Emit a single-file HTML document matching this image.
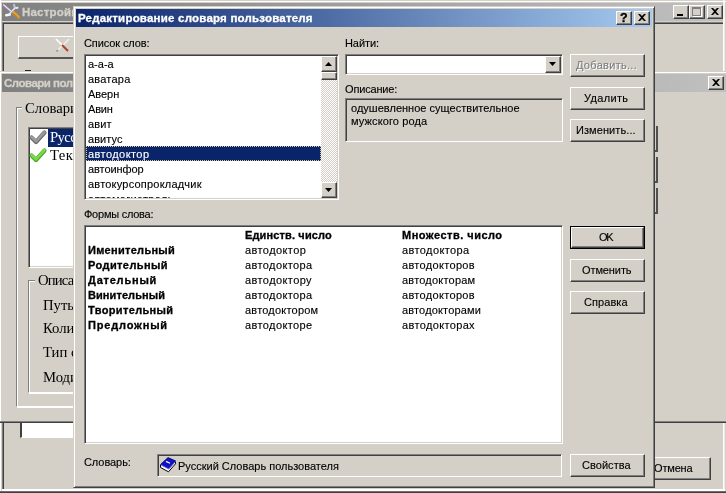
<!DOCTYPE html>
<html><head><meta charset="utf-8"><title>dlg</title>
<style>
*{margin:0;padding:0;box-sizing:border-box}
html,body{width:726px;height:493px;overflow:hidden;background:#d4d0c8}
body{position:relative;will-change:transform;-webkit-text-stroke:0.12px;font-family:"Liberation Sans",sans-serif;font-size:11px;color:#000}
.a{position:absolute}
.t{position:absolute;white-space:nowrap;line-height:13px;height:13px}
.s{position:absolute;white-space:nowrap;-webkit-text-stroke:0;font-family:"Liberation Serif",serif;font-size:14.7px;line-height:17px;height:17px}
.btn{position:absolute;background:#d4d0c8;border:1px solid;border-color:#fff #404040 #404040 #fff;box-shadow:inset -1px -1px 0 #808080,inset 1px 1px 0 #d4d0c8}
.sunk{position:absolute;border:1px solid;border-color:#808080 #fff #fff #808080;box-shadow:inset 1px 1px 0 #404040,inset -1px -1px 0 #d4d0c8;background:#fff;overflow:hidden}
.cap{position:absolute;background:#d4d0c8;border:1px solid;border-color:#fff #404040 #404040 #fff;box-shadow:inset -1px -1px 0 #808080}
.gb{position:absolute;border:1px solid;border-color:#808080 #fff #fff #808080;box-shadow:inset 1px 1px 0 #fff, 1px 1px 0 #fff}
svg{position:absolute;overflow:visible}
</style></head><body>
<div class="a" style="left:0;top:1px;width:726px;height:1px;background:#fff"></div>
<div class="a" style="left:0;top:0;width:1px;height:493px;background:#fff"></div>
<div class="a" style="left:2px;top:3px;width:721px;height:18px;background:linear-gradient(90deg,#808080,#c0c0c0)"></div>
<div class="a" style="left:723px;top:0;width:2px;height:72px;background:#f4f3f0"></div>
<svg style="left:4px;top:4px" width="16" height="16" viewBox="0 0 16 16"><path d="M2.2 11.2L5.8 10.6" stroke="#f8f6ff" stroke-width="2.4" stroke-linecap="round"/><path d="M4.5 10.8L11 4" stroke="#ecebfa" stroke-width="1.5"/><path d="M10.4 0.2c-.5 1.7-.1 2.9 1 3.5 1 .5 2 .3 2.8-.4" stroke="#e4e6fb" stroke-width="1.8" fill="none"/><path d="M10.2 1.2c-.2 1 .1 1.8.7 2.2" stroke="#6a74c0" stroke-width="0.8" fill="none"/><path d="M-0.8 0.6l9 7.6" stroke="#b9a6e0" stroke-width="2"/><path d="M-0.8 0.6l9 7.6" stroke="#fff" stroke-width="0.8"/><path d="M9.4 8.4L14.4 13" stroke="#e9a21c" stroke-width="2.8" stroke-linecap="round"/><path d="M9.2 9.4l4.6 4.2" stroke="#b97a10" stroke-width="0.8"/></svg>
<div class="t" style="left:22px;top:6px;font-size:11.5px;font-weight:bold;-webkit-text-stroke:0.3px;color:#d4d0c8;letter-spacing:0.21px;">Настройки</div><div class="cap" style="left:673px;top:5px;width:16px;height:14px;"></div>
<div class="a" style="left:677px;top:14px;width:6px;height:2px;background:#000"></div>
<div class="cap" style="left:689px;top:5px;width:16px;height:14px;"></div>
<div class="a" style="left:692px;top:7px;width:9px;height:9px;border:1px solid #808080;border-top-width:2px;box-shadow:1px 1px 0 #fff"></div>
<div class="cap" style="left:707px;top:5px;width:16px;height:14px;"></div>
<svg style="left:711px;top:8px" width="8" height="7" viewBox="0 0 8 7"><path d="M0 0h2l2 2 2-2h2L5 3.5 8 7H6L4 5 2 7H0l3-3.5z" fill="#000"/></svg>
<div class="a" style="left:2px;top:22px;width:721px;height:1px;background:#808080"></div>
<div class="a" style="left:3px;top:23px;width:720px;height:1px;background:#404040"></div>
<div class="a" style="left:2px;top:22px;width:1px;height:468px;background:#808080"></div>
<div class="a" style="left:3px;top:23px;width:1px;height:466px;background:#404040"></div>
<div class="a" style="left:723px;top:22px;width:1px;height:469px;background:#fff"></div>
<div class="a" style="left:724px;top:22px;width:1px;height:469px;background:#eceae6"></div>
<div class="a" style="left:2px;top:489px;width:723px;height:2px;background:#fff"></div>
<div class="a" style="left:0;top:491px;width:726px;height:1px;background:#707070"></div>
<div class="a" style="left:0;top:492px;width:726px;height:1px;background:#404040"></div>
<div class="a" style="left:18px;top:36px;width:60px;height:23px;border-top:1px solid #fff;border-left:1px solid #fff;border-bottom:2px solid #555"></div>
<svg style="left:55px;top:38px" width="16" height="15" viewBox="0 0 16 15"><path d="M1 1l6 6" stroke="#fff" stroke-width="1.6"/><path d="M14 1L3 12" stroke="#f0eeea" stroke-width="1.6"/><path d="M3 12l-1.5 1.5" stroke="#909090" stroke-width="1.6"/><path d="M7 7l6 6" stroke="#a8402c" stroke-width="1.9"/></svg>
<div class="a" style="left:25px;top:70px;width:6px;height:1px;background:#222"></div>
<div class="a" style="left:20px;top:422px;width:60px;height:16px;background:#fff;border-left:2px solid #404040;border-bottom:1px solid #fff"></div>
<div class="btn" style="left:636px;top:457px;width:75px;height:23px;"></div>
<div class="t" style="left:654px;top:462px;letter-spacing:-0.17px;">Отмена</div><div class="a" style="left:0;top:71px;width:726px;height:352px;background:#d4d0c8"></div>
<div class="a" style="left:0;top:72px;width:726px;height:1px;background:#fff"></div>
<div class="a" style="left:0;top:72px;width:1px;height:350px;background:#fff"></div>
<div class="a" style="left:2px;top:74px;width:724px;height:18px;background:linear-gradient(90deg,#808080,#c0c0c0)"></div>
<div class="t" style="left:4px;top:77px;font-size:11.5px;font-weight:bold;-webkit-text-stroke:0.3px;color:#d4d0c8;letter-spacing:-0.5px;">Словари пользователя</div><div class="cap" style="left:708px;top:76px;width:16px;height:14px;"></div>
<svg style="left:712px;top:79px" width="8" height="7" viewBox="0 0 8 7"><path d="M0 0h2l2 2 2-2h2L5 3.5 8 7H6L4 5 2 7H0l3-3.5z" fill="#000"/></svg>
<div class="a" style="left:0;top:421px;width:726px;height:1px;background:#808080"></div>
<div class="a" style="left:0;top:422px;width:726px;height:1px;background:#404040"></div>
<div class="gb" style="left:16px;top:107px;width:620px;height:300px;"></div>
<div class="s" style="left:25px;top:99.5px;background:#d4d0c8;padding:0 3px;margin-left:-3px;">Словари</div><div class="sunk" style="left:28px;top:127px;width:300px;height:141px;"></div>
<div class="a" style="left:48px;top:129px;width:120px;height:18px;background:#0a246a"></div>
<svg style="left:30px;top:130px" width="16" height="14" viewBox="0 0 16 14"><path d="M1.5 7.5L6 12 14.5 2.5" stroke="#6a6a6a" stroke-width="4.2" fill="none" stroke-linejoin="round" stroke-linecap="round"/><path d="M1.5 7L6 11.3 14.5 2" stroke="#9a9a9a" stroke-width="2.6" fill="none" stroke-linejoin="round" stroke-linecap="round"/></svg>
<svg style="left:30px;top:148px" width="16" height="14" viewBox="0 0 16 14"><path d="M1.5 7.5L6 12 14.5 2.5" stroke="#4aa828" stroke-width="4.2" fill="none" stroke-linejoin="round" stroke-linecap="round"/><path d="M1.5 7L6 11.3 14.5 2" stroke="#7ad84a" stroke-width="2.6" fill="none" stroke-linejoin="round" stroke-linecap="round"/></svg>
<div class="s" style="left:50px;top:129px;color:#fff;letter-spacing:-0.62px;">Русский</div><div class="s" style="left:50px;top:147px;letter-spacing:0.36px;">Текущий</div><div class="gb" style="left:28px;top:280px;width:590px;height:113px;"></div>
<div class="s" style="left:38px;top:272px;letter-spacing:-0.85px;background:#d4d0c8;padding:0 3px;margin-left:-3px;">Описание</div><div class="s" style="left:43px;top:297px;">Путь</div><div class="s" style="left:43px;top:320px;">Количество</div><div class="s" style="left:43px;top:344px;">Тип словаря</div><div class="s" style="left:43px;top:369px;">Модифицирован</div><div class="a" style="left:600px;top:126px;width:58px;height:26px;border-right:2px solid #505050;border-bottom:2px solid #505050"></div>
<div class="a" style="left:600px;top:157px;width:58px;height:26px;border-right:2px solid #505050;border-bottom:2px solid #505050"></div>
<div class="a" style="left:600px;top:188px;width:58px;height:26px;border-right:2px solid #505050;border-bottom:2px solid #505050"></div>
<div class="a" style="left:73px;top:6px;width:582px;height:482px;background:#d4d0c8;border:1px solid;border-color:#d4d0c8 #404040 #404040 #d4d0c8;box-shadow:inset 1px 1px 0 #fff,inset -1px -1px 0 #808080"></div>
<div class="a" style="left:76px;top:9px;width:576px;height:18px;background:linear-gradient(90deg,#0a246a,#a6caf0)"></div>
<div class="t" style="left:78px;top:12px;font-size:11.5px;font-weight:bold;-webkit-text-stroke:0.3px;color:#fff;letter-spacing:0.21px;">Редактирование словаря пользователя</div><div class="cap" style="left:616px;top:11px;width:16px;height:14px;"></div>
<div class="t" style="left:620px;top:12px;font-size:12.5px;font-weight:bold;-webkit-text-stroke:0.3px;">?</div><div class="cap" style="left:634px;top:11px;width:16px;height:14px;"></div>
<svg style="left:638px;top:14px" width="8" height="7" viewBox="0 0 8 7"><path d="M0 0h2l2 2 2-2h2L5 3.5 8 7H6L4 5 2 7H0l3-3.5z" fill="#000"/></svg>
<div class="t" style="left:84px;top:37px;letter-spacing:-0.1px;">Список слов:</div><div class="t" style="left:345px;top:37px;letter-spacing:-0.07px;">Найти:</div><div class="t" style="left:345px;top:83px;letter-spacing:-0.17px;">Описание:</div><div class="t" style="left:84px;top:208px;letter-spacing:-0.24px;">Формы слова:</div><div class="t" style="left:84px;top:456px;letter-spacing:-0.07px;">Словарь:</div><div class="sunk" style="left:84px;top:54px;width:255px;height:146px;"></div>
<div class="a" style="left:86px;top:56px;width:235px;height:142px;overflow:hidden">
<div class="t" style="left:2px;top:2px;">а-а-а</div><div class="t" style="left:2px;top:17px;letter-spacing:0.22px;">аватара</div><div class="t" style="left:2px;top:32px;letter-spacing:-0.04px;">Аверн</div><div class="t" style="left:2px;top:47px;letter-spacing:-0.2px;">Авин</div><div class="t" style="left:2px;top:62px;letter-spacing:0.11px;">авит</div><div class="t" style="left:2px;top:77px;letter-spacing:0.07px;">авитус</div><div class="a" style="left:0;top:90px;width:235px;height:15px;background:#0a246a;outline:1px dotted #d8c890;outline-offset:-1px"></div>
<div class="t" style="left:2px;top:92px;color:#fff;letter-spacing:0.43px;">автодоктор</div><div class="t" style="left:2px;top:107px;letter-spacing:-0.07px;">автоинфор</div><div class="t" style="left:2px;top:122px;letter-spacing:0.21px;">автокурсопрокладчик</div><div class="t" style="left:2px;top:137px;letter-spacing:0.31px;">автомагистраль</div></div>
<div class="a" style="left:321px;top:56px;width:16px;height:142px;background:repeating-conic-gradient(#fff 0 25%,#d4d0c8 0 50%) 0 0/2px 2px"></div>
<div class="cap" style="left:321px;top:56px;width:16px;height:16px;"></div>
<svg style="left:325px;top:62px" width="7" height="4" viewBox="0 0 7 4"><path d="M3.5 0L7 4H0z" fill="#000"/></svg>
<div class="cap" style="left:321px;top:72px;width:16px;height:8px;"></div>
<div class="cap" style="left:321px;top:182px;width:16px;height:16px;"></div>
<svg style="left:325px;top:188px" width="7" height="4" viewBox="0 0 7 4"><path d="M0 0h7L3.5 4z" fill="#000"/></svg>
<div class="sunk" style="left:345px;top:54px;width:218px;height:21px;"></div>
<div class="cap" style="left:545px;top:56px;width:16px;height:17px;"></div>
<svg style="left:549px;top:62px" width="7" height="4" viewBox="0 0 7 4"><path d="M0 0h7L3.5 4z" fill="#000"/></svg>
<div class="sunk" style="left:345px;top:98px;width:218px;height:44px;background:#d4d0c8"></div>
<div class="t" style="left:351px;top:102px;letter-spacing:0.02px;">одушевленное существительное</div><div class="t" style="left:351px;top:115px;letter-spacing:0.12px;">мужского рода</div><div class="btn" style="left:570px;top:54px;width:75px;height:23px;"></div>
<div class="t" style="left:577px;top:60px;color:#fff;letter-spacing:0.3px;">Добавить...</div><div class="t" style="left:576px;top:59px;color:#808080;letter-spacing:0.3px;">Добавить...</div><div class="btn" style="left:570px;top:87px;width:75px;height:23px;"></div>
<div class="t" style="left:584px;top:92px;letter-spacing:0.35px;">Удалить</div><div class="btn" style="left:570px;top:119px;width:75px;height:23px;"></div>
<div class="t" style="left:576px;top:124px;letter-spacing:0.08px;">Изменить...</div><div class="a" style="left:570px;top:226px;width:75px;height:23px;background:#000"></div>
<div class="btn" style="left:571px;top:227px;width:73px;height:21px;"></div>
<div class="t" style="left:599px;top:231px;letter-spacing:-1.31px;">OK</div><div class="btn" style="left:570px;top:259px;width:75px;height:23px;"></div>
<div class="t" style="left:582px;top:264px;letter-spacing:-0.1px;">Отменить</div><div class="btn" style="left:570px;top:291px;width:75px;height:23px;"></div>
<div class="t" style="left:584px;top:296px;letter-spacing:0.07px;">Справка</div><div class="btn" style="left:570px;top:454px;width:75px;height:23px;"></div>
<div class="t" style="left:582px;top:459px;letter-spacing:0.04px;">Свойства</div><div class="sunk" style="left:84px;top:225px;width:479px;height:219px;"></div>
<div class="a" style="left:86px;top:227px;width:475px;height:215px;overflow:hidden">
<div class="t" style="left:159px;top:2px;font-weight:bold;-webkit-text-stroke:0.3px;letter-spacing:0.14px;">Единств. число</div><div class="t" style="left:316px;top:2px;font-weight:bold;-webkit-text-stroke:0.3px;letter-spacing:0.49px;">Множеств. число</div><div class="t" style="left:2px;top:17px;font-weight:bold;-webkit-text-stroke:0.3px;letter-spacing:0.29px;">Именительный</div><div class="t" style="left:159px;top:17px;letter-spacing:0.41px;">автодоктор</div><div class="t" style="left:316px;top:17px;letter-spacing:0.39px;">автодоктора</div><div class="t" style="left:2px;top:32px;font-weight:bold;-webkit-text-stroke:0.3px;letter-spacing:0.42px;">Родительный</div><div class="t" style="left:159px;top:32px;letter-spacing:0.39px;">автодоктора</div><div class="t" style="left:316px;top:32px;letter-spacing:0.32px;">автодокторов</div><div class="t" style="left:2px;top:47px;font-weight:bold;-webkit-text-stroke:0.3px;letter-spacing:0.79px;">Дательный</div><div class="t" style="left:159px;top:47px;letter-spacing:0.41px;">автодоктору</div><div class="t" style="left:316px;top:47px;letter-spacing:0.21px;">автодокторам</div><div class="t" style="left:2px;top:62px;font-weight:bold;-webkit-text-stroke:0.3px;letter-spacing:0.08px;">Винительный</div><div class="t" style="left:159px;top:62px;letter-spacing:0.39px;">автодоктора</div><div class="t" style="left:316px;top:62px;letter-spacing:0.32px;">автодокторов</div><div class="t" style="left:2px;top:77px;font-weight:bold;-webkit-text-stroke:0.3px;letter-spacing:0.36px;">Творительный</div><div class="t" style="left:159px;top:77px;letter-spacing:0.21px;">автодоктором</div><div class="t" style="left:316px;top:77px;letter-spacing:0.16px;">автодокторами</div><div class="t" style="left:2px;top:92px;font-weight:bold;-webkit-text-stroke:0.3px;letter-spacing:0.82px;">Предложный</div><div class="t" style="left:159px;top:92px;letter-spacing:0.39px;">автодокторе</div><div class="t" style="left:316px;top:92px;letter-spacing:0.35px;">автодокторах</div></div>
<div class="sunk" style="left:157px;top:454px;width:405px;height:23px;background:#d4d0c8"></div>
<svg style="left:160px;top:457px" width="16" height="16" viewBox="0 0 16 16"><path d="M0.5 7.5V10.5L8.5 14.8 15.5 6.8V4" fill="#fff" stroke="#000" stroke-width="1"/><path d="M0.5 7.5L8 0.6 15.8 4 8.8 11.8z" fill="#1010c8" stroke="#000060" stroke-width="0.8"/><path d="M6 4.4l4 1.8" stroke="#fff" stroke-width="1.2"/><path d="M0.5 7.7L8.8 12 15.6 4.3" fill="none" stroke="#8080ff" stroke-width="0.8"/></svg>
<div class="t" style="left:178px;top:460px;">Русский Словарь пользователя</div></body></html>
